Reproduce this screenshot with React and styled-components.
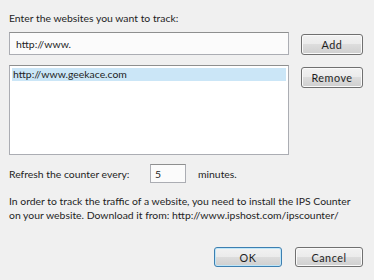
import React from "react";
import styled, { createGlobalStyle } from "styled-components";

const GlobalStyle = createGlobalStyle`
  html, body {
    margin: 0;
    padding: 0;
    background: #f0f0f0;
  }
`;

const Dialog = styled.div`
  width: 374px;
  height: 280px;
  box-sizing: border-box;
  padding: 10px 11px 0 9px;
  background: #f0f0f0;
  font-family: Lato, "Open Sans", sans-serif;
  font-size: 10.4px;
  color: #1e1e1e;
  display: flex;
  flex-direction: column;
  white-space: nowrap;
`;

const Label = styled.div`
  line-height: 16px;
  height: 16px;
`;

const Grid = styled.div`
  margin-top: 6px;
  display: grid;
  grid-template-columns: 280px 62px;
  column-gap: 12px;
  row-gap: 10px;
`;

const TextInput = styled.input`
  box-sizing: border-box;
  height: 23px;
  width: 100%;
  margin: 0;
  border: 1px solid #abadb3;
  border-top-color: #8e8f8f;
  background: #fbfbfb;
  padding: 0 6px;
  font: inherit;
  color: #1e1e1e;
  outline: none;
`;

const ListBox = styled.div`
  box-sizing: border-box;
  height: 90px;
  border: 1px solid #abadb3;
  border-top-color: #8e8f8f;
  background: #fff;
  padding: 2px;
`;

const ListItem = styled.div`
  height: 13px;
  line-height: 13px;
  padding-left: 1px;
  background: ${({ selected }) => (selected ? "#cbe6f7" : "transparent")};
`;

const Button = styled.button`
  box-sizing: border-box;
  height: ${({ tall }) => (tall ? "21px" : "20px")};
  margin: ${({ offset }) => offset || 0} 0 0 0;
  width: ${({ w }) => w || "62px"};
  padding: 0;
  border: 1px solid ${({ primary }) => (primary ? "#3c7fb1" : "#707070")};
  border-radius: 3px;
  background: linear-gradient(
    to bottom,
    #f2f2f2 0%,
    #ebebeb 49%,
    #dddddd 50%,
    #cfcfcf 100%
  );
  box-shadow: inset 0 0 0 1px
    ${({ primary }) => (primary ? "#bfe6f8" : "#fafafa")};
  font: inherit;
  font-size: 10.8px;
  color: #1e1e1e;
  letter-spacing: 0.5px;
  cursor: default;
`;

const RefreshRow = styled.div`
  margin-top: 9px;
  display: flex;
  align-items: center;
  height: 19px;
`;

const RowLabel = styled.span`
  width: 141px;
`;

const SmallInput = styled.input`
  box-sizing: border-box;
  width: 36px;
  height: 19px;
  margin: 0;
  border: 1px solid #abadb3;
  border-top-color: #8e8f8f;
  background: #fbfbfb;
  padding: 0 4px;
  font: inherit;
  color: #1e1e1e;
  outline: none;
`;

const Unit = styled.span`
  margin-left: 12px;
`;

const Note = styled.p`
  margin: 11px 0 0;
  line-height: 14px;
`;

const Footer = styled.div`
  margin-top: auto;
  margin-bottom: 13px;
  display: flex;
  justify-content: flex-end;
  gap: 13px;
`;

export default function App() {
  return (
    <Dialog>
      <GlobalStyle />
      <Label>Enter the websites you want to track:</Label>
      <Grid>
        <TextInput defaultValue="http://www." />
        <Button tall offset="2px">
          Add
        </Button>
        <ListBox>
          <ListItem selected>http://www.geekace.com</ListItem>
        </ListBox>
        <Button tall offset="2px">
          Remove
        </Button>
      </Grid>
      <RefreshRow>
        <RowLabel>Refresh the counter every:</RowLabel>
        <SmallInput defaultValue="5" />
        <Unit>minutes.</Unit>
      </RefreshRow>
      <Note>
        In order to track the traffic of a website, you need to install the IPS
        Counter
        <br />
        on your website. Download it from: http://www.ipshost.com/ipscounter/
      </Note>
      <Footer>
        <Button primary w="68px">
          OK
        </Button>
        <Button w="68px">Cancel</Button>
      </Footer>
    </Dialog>
  );
}
